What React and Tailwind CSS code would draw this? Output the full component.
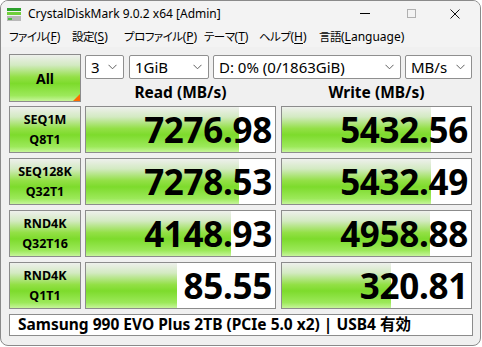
import React from "react";

const font = { fontFamily: '"Noto Sans", "Noto Sans CJK JP", sans-serif' };

const grad =
  "bg-[linear-gradient(to_bottom,#eef0ec_0%,#d3eac2_22%,#93e046_48%,#7ddb2c_62%,#9ce95a_88%,#c6f59a_100%)]";

function Sel({ w, children }) {
  return (
    <div
      className={`${w} h-[24px] bg-white border border-[#8f8f8f] rounded-[2px] flex items-center justify-between pl-[5px] pr-[6px] text-[15px] text-black`}
    >
      <span className="leading-none">{children}</span>
      <svg width="9" height="6" viewBox="0 0 9 6" className="shrink-0">
        <path d="M0.5 0.8 L4.5 4.8 L8.5 0.8" fill="none" stroke="#606060" strokeWidth="1" />
      </svg>
    </div>
  );
}

function Label({ a, b }) {
  return (
    <div
      className={`w-[72px] h-[47px] shrink-0 border border-[#8c8c8c] ${grad} flex flex-col items-center justify-center text-[12.5px] font-bold leading-[20px] text-black`}
    >
      <span>{a}</span>
      <span>{b}</span>
    </div>
  );
}

function Val({ v, pct }) {
  return (
    <div className="relative w-[191px] h-[47px] shrink-0 border border-[#8c8c8c] bg-white overflow-hidden">
      <div className={`absolute left-0 top-0 bottom-0 ${grad}`} style={{ width: pct + "%" }} />
      <div className="relative h-full flex items-center justify-end pr-[3px] text-[35px] font-bold text-black tracking-[-0.3px] leading-none">
        {v}
      </div>
    </div>
  );
}

function pct(v) {
  return (0.171 * Math.log10(v) + 0.15) * 100;
}

const rows = [
  ["SEQ1M", "Q8T1", "7276.98", 7276.98, "5432.56", 5432.56],
  ["SEQ128K", "Q32T1", "7278.53", 7278.53, "5432.49", 5432.49],
  ["RND4K", "Q32T16", "4148.93", 4148.93, "4958.88", 4958.88],
  ["RND4K", "Q1T1", "85.55", 85.55, "320.81", 320.81],
];

function M({ w, jp, k, rest = "" }) {
  return (
    <span className={`${w} shrink-0 whitespace-nowrap`}>
      <span className="font-['Noto_Sans_CJK_JP',sans-serif] [font-feature-settings:'palt'] tracking-[-0.5px]">{jp}</span>
      <span className="text-[12px]">(<span className="underline underline-offset-2">{k}</span>{rest})</span>
    </span>
  );
}

export default function App() {
  return (
    <div className="w-[482px] h-[347px] bg-white" style={font}>
      <div className="w-[481px] h-[346px] border border-[#8a8a8a] rounded-[8px] bg-[#f0f0f0] overflow-hidden flex flex-col">
        {/* title bar */}
        <div className="h-[25px] bg-[#f3f3f3] flex items-center shrink-0">
          <svg width="14" height="13" viewBox="0 0 14 13" className="ml-[6px] mt-[1px]">
            <rect x="0" y="0" width="14" height="3" fill="#2ca02c" />
            <rect x="0" y="4" width="14" height="3" fill="#6fcf3a" />
            <rect x="0" y="8" width="14" height="5" fill="#b8b8b8" />
            <rect x="1" y="10" width="4" height="2" fill="#4ac040" />
          </svg>
          <span className="ml-[7px] text-[12px] text-black">CrystalDiskMark 9.0.2 x64 [Admin]</span>
          <div className="ml-auto flex items-center h-full">
            <div className="w-[46px] flex justify-center">
              <div className="w-[10px] h-[1px] bg-black" />
            </div>
            <div className="w-[46px] flex justify-center">
              <div className="w-[9px] h-[9px] border border-[#b0b0b0]" />
            </div>
            <div className="w-[46px] flex justify-center pr-[4px]">
              <svg width="10" height="10" viewBox="0 0 10 10">
                <path d="M0.5 0.5 L9.5 9.5 M9.5 0.5 L0.5 9.5" stroke="#111" strokeWidth="1" />
              </svg>
            </div>
          </div>
        </div>
        {/* menu bar */}
        <div className="h-[21px] bg-[#f3f3f3] flex items-center text-[11.5px] text-black shrink-0 pl-[8px]">
          <M w="w-[63px]" jp="ファイル" k="F" />
          <M w="w-[52px]" jp="設定" k="S" />
          <M w="w-[80px]" jp="プロファイル" k="P" />
          <M w="w-[55px]" jp="テーマ" k="T" />
          <M w="w-[60px]" jp="ヘルプ" k="H" />
          <M w="w-[90px]" jp="言語" k="L" rest="anguage" />
        </div>
        {/* content */}
        <div className="pl-[8px] pt-[7px] flex flex-col">
          <div className="flex gap-[4px] h-[48px]">
            <div className={`relative w-[72px] h-[48px] shrink-0 border border-[#8c8c8c] ${grad} flex items-center justify-center text-[14px] font-bold text-black`}>
              All
              <div className="absolute right-0 bottom-0 w-0 h-0 border-l-[7px] border-l-transparent border-b-[7px] border-b-[#ff6a00]" />
            </div>
            <div className="flex flex-col">
              <div className="flex gap-[4px] mt-[1px]">
                <Sel w="w-[39px] mr-[1px]">3</Sel>
                <Sel w="w-[80px]">1GiB</Sel>
                <Sel w="w-[188px]">D: 0% (0/1863GiB)</Sel>
                <Sel w="w-[67px]">MB/s</Sel>
              </div>
              <div className="flex gap-[5px] mt-[4px] text-[15.5px] leading-[19px] font-bold text-black">
                <div className="w-[191px] text-center">Read (MB/s)</div>
                <div className="w-[191px] text-center">Write (MB/s)</div>
              </div>
            </div>
          </div>
          <div className="mt-[4px] flex flex-col gap-[5px]">
            {rows.map((r, i) => (
              <div key={i} className="flex">
                <Label a={r[0]} b={r[1]} />
                <div className="w-[4px]" />
                <Val v={r[2]} pct={pct(r[3])} />
                <div className="w-[5px]" />
                <Val v={r[4]} pct={pct(r[5])} />
              </div>
            ))}
          </div>
          <div className="mt-[5px] w-[464px] h-[22px] bg-white border border-[#8c8c8c] flex items-center pl-[8px] text-[15.5px] font-bold text-black whitespace-nowrap">
            Samsung 990 EVO Plus 2TB (PCIe 5.0 x2) | USB4 有効
          </div>
        </div>
      </div>
    </div>
  );
}
